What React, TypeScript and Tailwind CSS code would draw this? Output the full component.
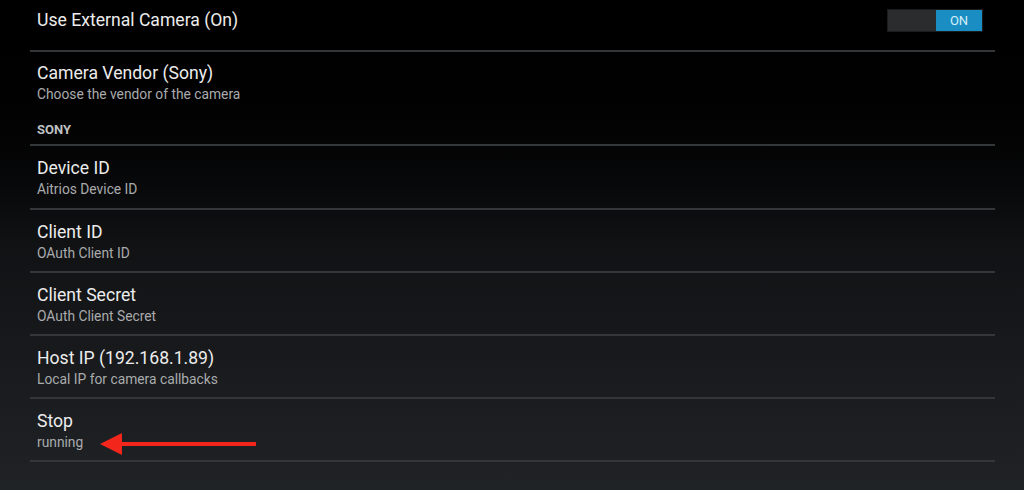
import React from 'react';

type Pref = { title: string; summary?: string };

const sonyPrefs: Pref[] = [
  { title: 'Device ID', summary: 'Aitrios Device ID' },
  { title: 'Client ID', summary: 'OAuth Client ID' },
  { title: 'Client Secret', summary: 'OAuth Client Secret' },
  { title: 'Host IP (192.168.1.89)', summary: 'Local IP for camera callbacks' },
];

function Divider() {
  return <div className="ml-[30px] mr-[29px] h-[2px] bg-[#34373a]" />;
}

function PrefRow({ title, summary, extra, tall }: Pref & { extra?: React.ReactNode; tall?: boolean }) {
  return (
    <div className={`relative flex flex-col pl-[37px] pt-[11px] ${tall ? 'h-[62px]' : 'h-[61px]'}`}>
      <div className="text-[17.6px] leading-[22px] text-[#ececec]">{title}</div>
      {summary && <div className="text-[13.8px] leading-[20px] text-[#a9abad]">{summary}</div>}
      {extra}
    </div>
  );
}

function RedArrow() {
  return (
    <svg className="absolute left-[97px] top-[33px]" width="162" height="24" viewBox="0 0 162 24">
      <path d="M3 12 L25 1 L25 23 Z" fill="#f2261a" />
      <rect x="22" y="10" width="137" height="4" fill="#f2261a" />
    </svg>
  );
}

export default function App() {
  return (
    <div
      className="h-[490px] w-[1024px] overflow-hidden bg-gradient-to-b from-[#000000] via-[#111214] to-[#202326]"
      style={{ fontFamily: 'Roboto, "Noto Sans", sans-serif' }}
    >
      {/* toggle row, list is scrolled a little */}
      <div className="flex h-[50px] items-center justify-between pb-[9px] pl-[37px] pr-[41px]">
        <div className="text-[17.6px] text-[#ececec]">Use External Camera (On)</div>
        <div className="flex h-[23px] w-[96px] border border-[#1b1c1d] bg-[#2b2c2e]">
          <div className="flex-1" />
          <div className="flex w-[46px] items-center justify-center bg-[#1a8ec2] text-[13px] text-[#d6eef8]">ON</div>
        </div>
      </div>
      <Divider />

      <div className="flex flex-col pl-[37px] pt-[10px]">
        <div className="text-[17.6px] leading-[22px] text-[#ececec]">Camera Vendor (Sony)</div>
        <div className="text-[13.8px] leading-[20px] text-[#a9abad]">Choose the vendor of the camera</div>
        <div className="mt-[18px] mb-[6px] text-[13px] leading-[16px] font-bold text-[#bfc1c3]">SONY</div>
      </div>
      <Divider />

      {sonyPrefs.map((p, i) => (
        <React.Fragment key={p.title}>
          <PrefRow {...p} tall={i === 0} />
          <Divider />
        </React.Fragment>
      ))}

      <PrefRow title="Stop" summary="running" extra={<RedArrow />} />
      <Divider />
    </div>
  );
}
